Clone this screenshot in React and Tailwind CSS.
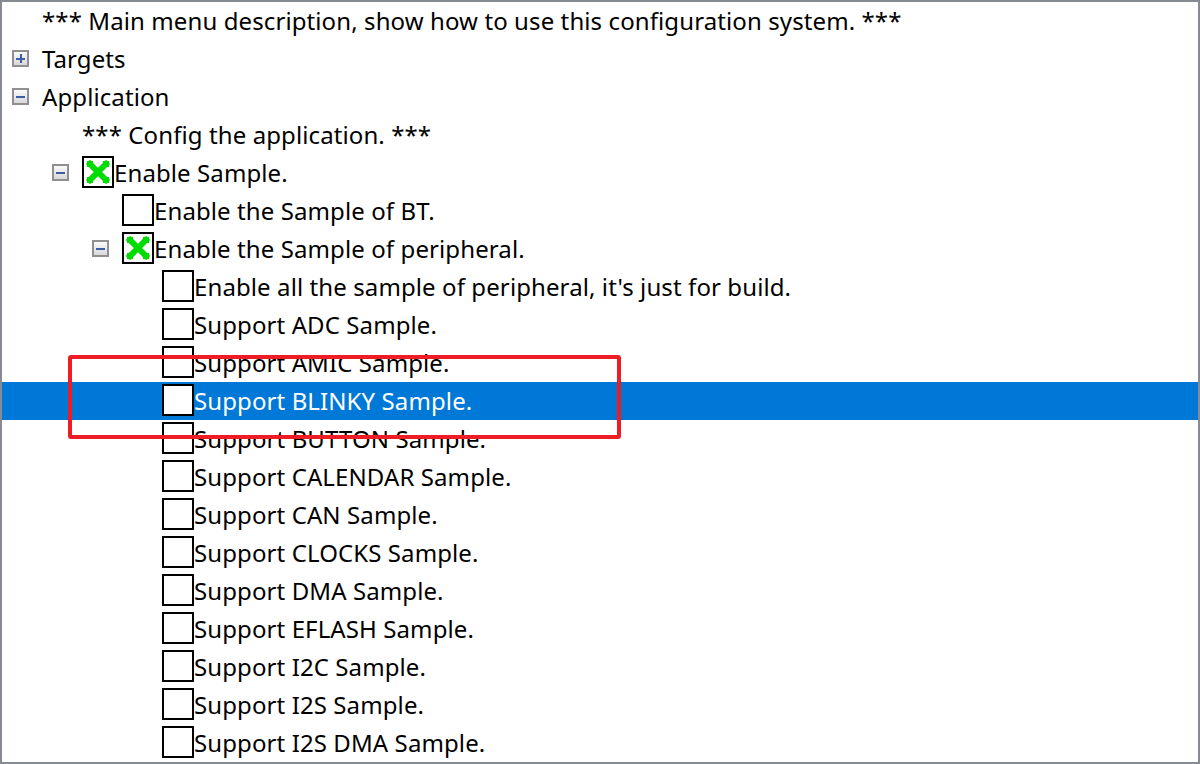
const rows = [
  { level: 0, text: "*** Main menu description, show how to use this configuration system. ***" },
  { level: 0, exp: "plus", text: "Targets" },
  { level: 0, exp: "minus", text: "Application" },
  { level: 1, text: "*** Config the application. ***" },
  { level: 1, exp: "minus", box: "checked", text: "Enable Sample." },
  { level: 2, box: "empty", text: "Enable the Sample of BT." },
  { level: 2, exp: "minus", box: "checked", text: "Enable the Sample of peripheral." },
  { level: 3, box: "empty", text: "Enable all the sample of peripheral, it's just for build." },
  { level: 3, box: "empty", text: "Support ADC Sample." },
  { level: 3, box: "empty", text: "Support AMIC Sample." },
  { level: 3, box: "empty", text: "Support BLINKY Sample.", selected: true },
  { level: 3, box: "empty", text: "Support BUTTON Sample." },
  { level: 3, box: "empty", text: "Support CALENDAR Sample." },
  { level: 3, box: "empty", text: "Support CAN Sample." },
  { level: 3, box: "empty", text: "Support CLOCKS Sample." },
  { level: 3, box: "empty", text: "Support DMA Sample." },
  { level: 3, box: "empty", text: "Support EFLASH Sample." },
  { level: 3, box: "empty", text: "Support I2C Sample." },
  { level: 3, box: "empty", text: "Support I2S Sample." },
  { level: 3, box: "empty", text: "Support I2S DMA Sample." },
];

const indents = ["w-0", "w-[40px]", "w-[80px]", "w-[120px]"];

function Expander({ kind }) {
  return (
    <div className="ml-[10px] -mt-[1px] w-[17px] h-[17px] border-2 border-[#909090] bg-gradient-to-b from-[#fafafa] to-[#d8d8d8] flex items-center justify-center relative">
      <div className="absolute w-[9px] h-[2px] bg-[#3b5ea6]" />
      {kind === "plus" && <div className="absolute w-[2px] h-[9px] bg-[#3b5ea6]" />}
    </div>
  );
}

function CheckBox({ checked }) {
  return (
    <div className="w-[32px] h-[32px] -mt-[2px] border-2 border-black bg-white flex items-center justify-center shrink-0">
      {checked && (
        <svg width="26" height="26" viewBox="0 0 26 26">
          <path d="M5 5 L21 21 M21 5 L5 21" stroke="#00dc00" strokeWidth="6" strokeLinecap="square" />
          <path d="M2 2h6v6H2zM18 2h6v6h-6zM2 18h6v6H2zM18 18h6v6h-6z" fill="#00dc00" />
        </svg>
      )}
    </div>
  );
}

export default function App() {
  return (
    <div className="w-[1200px] h-[764px] border-2 border-[#868a91] bg-white overflow-hidden relative font-['Noto_Sans',sans-serif] text-[24px] tracking-[0.1px] text-black">
      {rows.map((r, i) => (
        <div
          key={i}
          className={`h-[38px] flex items-center ${r.selected ? "bg-[#0078d7] text-white" : ""}`}
        >
          <div className={`${indents[r.level]} shrink-0`} />
          <div className="w-[40px] shrink-0 flex items-center">
            {r.exp && <Expander kind={r.exp} />}
          </div>
          {r.box && <CheckBox checked={r.box === "checked"} />}
          <span className="whitespace-nowrap leading-none">{r.text}</span>
        </div>
      ))}
      {/* annotation */}
      <div className="absolute left-[66px] top-[353px] w-[553px] h-[84px] border-4 border-[#ee1c25] rounded-[3px]" />
    </div>
  );
}
